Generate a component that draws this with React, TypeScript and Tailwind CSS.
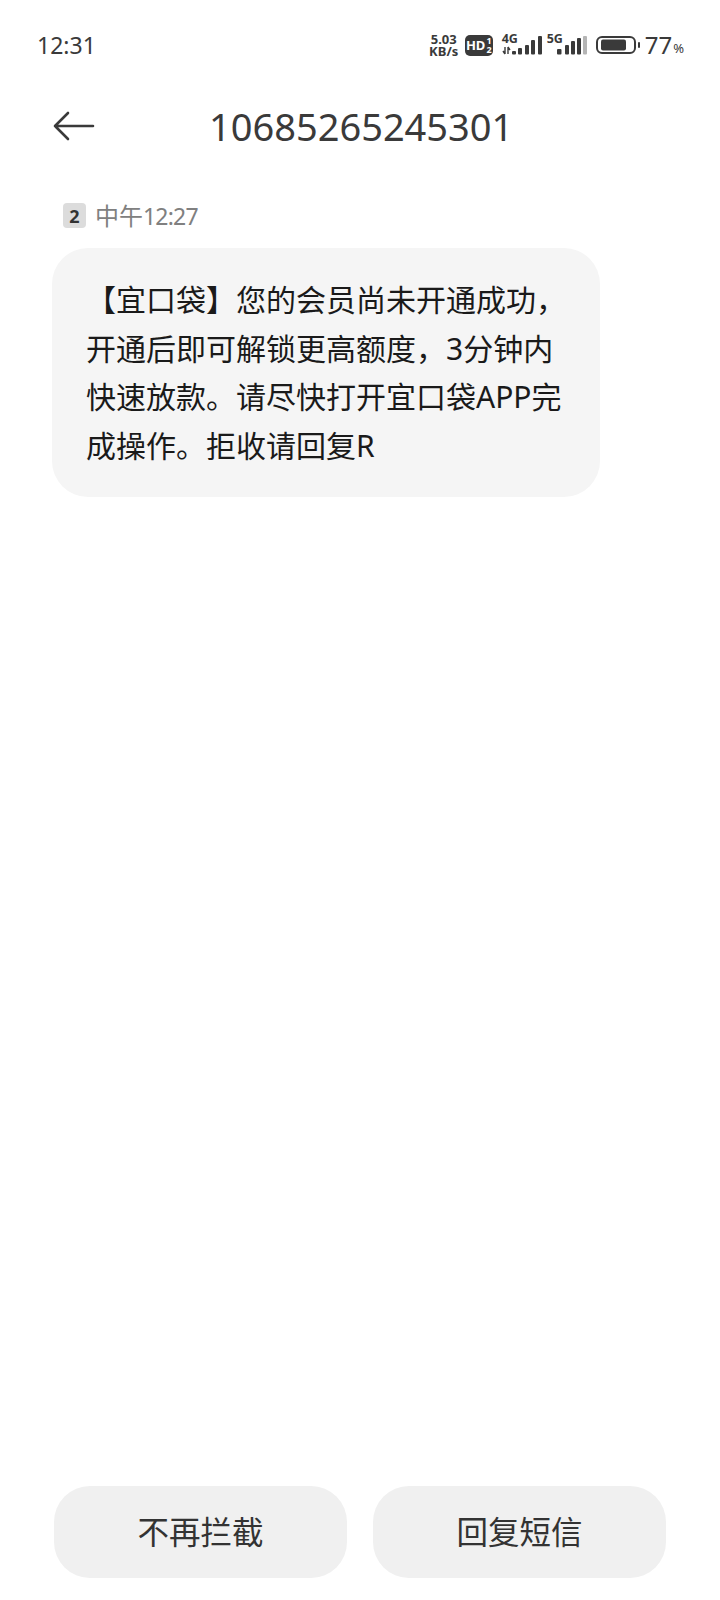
const font = { fontFamily: '"Noto Sans", "Noto Sans CJK SC", sans-serif' };

function StatusIcons() {
  return (
    <div className="flex items-center text-[#3a3a3a]">
      <div className="w-[32px] whitespace-pre-line text-center text-[13px] font-bold leading-[12px]">
        {"5.03\nKB/s"}
      </div>
      <div className="ml-[5px] flex h-[21px] w-[28px] items-center justify-center gap-[1px] rounded-[5px] bg-[#3a3a3a] text-white">
        <span className="text-[13px] font-bold leading-none">HD</span>
        <span className="whitespace-pre-line text-[9px] font-bold leading-[9px]">{"1\n2"}</span>
      </div>
      <div className="relative ml-[9px] h-[24px] w-[40px]">
        <span className="absolute left-0 top-[-1px] text-[12.5px] font-bold leading-[13px]">4G</span>
        <svg width="40" height="24" viewBox="0 0 40 24">
          <path d="M3 14v7M1 18l2 3M6 21v-7M8 17l-2-3" stroke="#3a3a3a" strokeWidth="1.4" fill="none" />
          <rect x="10" y="18" width="4" height="3.5" rx="1" fill="#3a3a3a" />
          <rect x="16" y="15" width="4" height="6.5" rx="1" fill="#3a3a3a" />
          <rect x="23" y="12" width="4" height="9.5" rx="1" fill="#3a3a3a" />
          <rect x="29" y="7" width="4" height="14.5" rx="1" fill="#3a3a3a" />
          <rect x="36" y="3" width="4" height="18.5" rx="1" fill="#3a3a3a" />
        </svg>
      </div>
      <div className="relative ml-[5px] h-[24px] w-[40px]">
        <span className="absolute left-0 top-[-1px] text-[12.5px] font-bold leading-[13px]">5G</span>
        <svg width="40" height="24" viewBox="0 0 40 24">
          <rect x="10" y="16" width="4.5" height="5.5" rx="1" fill="#3a3a3a" />
          <rect x="18" y="12" width="4" height="9.5" rx="1" fill="#3a3a3a" />
          <rect x="24" y="8" width="4" height="13.5" rx="1" fill="#3a3a3a" />
          <rect x="30" y="5" width="4" height="16.5" rx="1" fill="#3a3a3a" />
          <rect x="36" y="3" width="4" height="18.5" rx="1" fill="#b5b5b5" />
        </svg>
      </div>
      <svg className="ml-[9px]" width="44" height="20" viewBox="0 0 44 20">
        <rect x="1" y="2" width="38" height="16" rx="5" fill="none" stroke="#3a3a3a" strokeWidth="2" />
        <rect x="5" y="4.5" width="25" height="11" rx="2" fill="#3a3a3a" />
        <rect x="42" y="7" width="2" height="6" rx="1" fill="#3a3a3a" />
      </svg>
      <span className="ml-[5px] text-[24px] leading-none">77</span>
      <span className="ml-[1px] mt-[6px] text-[13px] leading-none">%</span>
    </div>
  );
}

export default function App() {
  return (
    <div className="flex h-[1600px] w-[720px] flex-col bg-white text-[#333]" style={font}>
      <div className="mt-[22px] flex h-[46px] items-center justify-between pl-[37px] pr-[36px]">
        <span className="text-[23px] leading-none text-[#3a3a3a]">12:31</span>
        <StatusIcons />
      </div>

      <div className="mt-[34px] flex h-[48px] items-center pl-[53px]">
        <svg width="42" height="30" viewBox="0 0 42 30" fill="none" stroke="#3a3a3a" strokeWidth="2.6" strokeLinecap="round" strokeLinejoin="round">
          <path d="M2 15h38M15 2L2 15l13 13" />
        </svg>
        <div className="ml-[114px] text-[38px] leading-none text-[#3a3a3a]">10685265245301</div>
      </div>

      <div className="mt-[53px] flex items-center pl-[63px]">
        <span className="flex h-[25px] w-[23px] items-center justify-center rounded-[4px] bg-[#dcdcdc] text-[18px] font-bold leading-none text-[#333]">
          2
        </span>
        <span className="ml-[9px] text-[24px] leading-none text-[#808080]">
          中午<span className="text-[23px] tracking-[-0.8px]">12:27</span>
        </span>
      </div>

      <div className="ml-[52px] mt-[20px] h-[249px] w-[548px] rounded-[36px] bg-[#f5f5f5] pl-[34px] pr-[30px] pt-[28px] text-[30px] leading-[48.5px] text-[#1a1a1a]">
        【宜口袋】您的会员尚未开通成功，开通后即可解锁更高额度，3分钟内快速放款。请尽快打开宜口袋APP完成操作。拒收请回复R
      </div>

      <div className="mt-auto mb-[22px] flex justify-between px-[54px]">
        <button className="h-[92px] w-[293px] rounded-[36px] bg-[#f0f0f0] text-[31.5px] text-[#333]">不再拦截</button>
        <button className="h-[92px] w-[293px] rounded-[36px] bg-[#f0f0f0] text-[31.5px] text-[#333]">回复短信</button>
      </div>
    </div>
  );
}
